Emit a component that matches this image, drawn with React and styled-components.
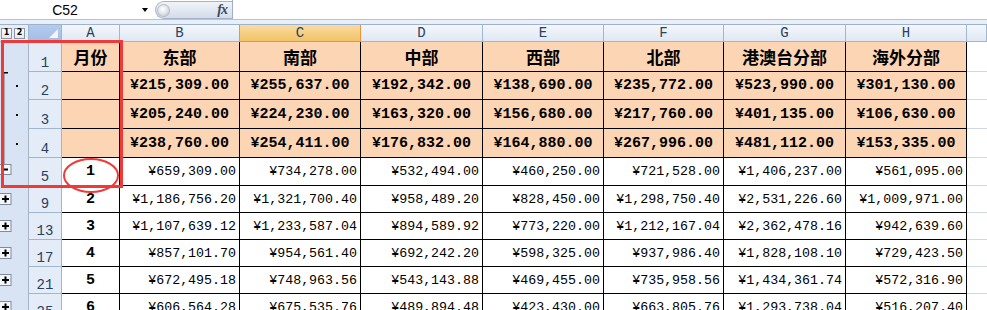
import React from "react"
import styled, { createGlobalStyle, css } from "styled-components"

const GlobalStyle = createGlobalStyle`
    html, body {
        margin: 0;
        padding: 0;
        background: #fff;
    }
    body {
        font-family: "Liberation Sans", Arial, sans-serif;
    }
`

const RED = "#ef3a3a"
const GRID = "#9eb6ce"

const columns = [
    { key: "A", w: 58 },
    { key: "B", w: 120 },
    { key: "C", w: 121 },
    { key: "D", w: 122 },
    { key: "E", w: 121 },
    { key: "F", w: 120 },
    { key: "G", w: 122 },
    { key: "H", w: 121 },
]

const titles = ["月份", "东部", "南部", "中部", "西部", "北部", "港澳台分部", "海外分部"]

const summaryRows = [
    { num: 2, h: 28, outline: "top", vals: ["¥215,309.00", "¥255,637.00", "¥192,342.00", "¥138,690.00", "¥235,772.00", "¥523,990.00", "¥301,130.00"] },
    { num: 3, h: 29, outline: "mid", vals: ["¥205,240.00", "¥224,230.00", "¥163,320.00", "¥156,680.00", "¥217,760.00", "¥401,135.00", "¥106,630.00"] },
    { num: 4, h: 29, outline: "mid", vals: ["¥238,760.00", "¥254,411.00", "¥176,832.00", "¥164,880.00", "¥267,996.00", "¥481,112.00", "¥153,335.00"] },
]

const monthRows = [
    { num: 5, h: 28, outline: "minus", month: 1, vals: ["¥659,309.00", "¥734,278.00", "¥532,494.00", "¥460,250.00", "¥721,528.00", "¥1,406,237.00", "¥561,095.00"] },
    { num: 9, h: 27, outline: "plus", month: 2, vals: ["¥1,186,756.20", "¥1,321,700.40", "¥958,489.20", "¥828,450.00", "¥1,298,750.40", "¥2,531,226.60", "¥1,009,971.00"] },
    { num: 13, h: 27, outline: "plus", month: 3, vals: ["¥1,107,639.12", "¥1,233,587.04", "¥894,589.92", "¥773,220.00", "¥1,212,167.04", "¥2,362,478.16", "¥942,639.60"] },
    { num: 17, h: 27, outline: "plus", month: 4, vals: ["¥857,101.70", "¥954,561.40", "¥692,242.20", "¥598,325.00", "¥937,986.40", "¥1,828,108.10", "¥729,423.50"] },
    { num: 21, h: 27, outline: "plus", month: 5, vals: ["¥672,495.18", "¥748,963.56", "¥543,143.88", "¥469,455.00", "¥735,958.56", "¥1,434,361.74", "¥572,316.90"] },
    { num: 25, h: 27, outline: "plus", month: 6, vals: ["¥606,564.28", "¥675,535.76", "¥489,894.48", "¥423,430.00", "¥663,805.76", "¥1,293,738.04", "¥516,207.40"] },
]

const Window = styled.div`
    position: relative;
    width: 987px;
    height: 310px;
    overflow: hidden;
    display: flex;
    flex-direction: column;
    background: #fff;
`

const FormulaBar = styled.div`
    display: flex;
    flex: none;
    height: 20px;
    box-sizing: border-box;
    border-bottom: 1px solid #b4c3d6;
    background: #fff;
`

const NameBox = styled.div`
    width: 130px;
    display: flex;
    align-items: center;
    justify-content: center;
    font: 14px "Liberation Sans", Arial, sans-serif;
    color: #000;
`

const NameArrow = styled.div`
    width: 25px;
    box-sizing: border-box;
    padding-left: 12px;
    display: flex;
    align-items: center;

    &::before {
        content: "";
        border-left: 3.5px solid transparent;
        border-right: 3.5px solid transparent;
        border-top: 4px solid #000;
    }
`

const FxPill = styled.div`
    width: 77px;
    height: 18px;
    margin-top: 1px;
    box-sizing: border-box;
    border: 1px solid #a3b4ca;
    border-right: none;
    border-radius: 9px 0 0 9px;
    background: linear-gradient(#f1f4f9, #d3dcea);
    display: flex;
    align-items: center;
    justify-content: space-between;
    padding: 0 5px 0 1px;
`

const Knob = styled.span`
    width: 13px;
    height: 13px;
    border-radius: 50%;
    background: radial-gradient(circle at 45% 40%, #ffffff 0%, #e3e7ec 40%, #a9b2bd 100%);
    box-shadow: inset 0 0 0 1px #b5bfcb;
`

const Fx = styled.span`
    font: italic bold 14px "Liberation Serif", "Times New Roman", serif;
    color: #3c4a5b;
    letter-spacing: -1px;
`

const FormulaInput = styled.div`
    flex: 1;
    border-left: 1px solid #9db0c8;
    background: #fff;
`

const Band = styled.div`
    flex: none;
    height: 5px;
    box-sizing: border-box;
    background: #e9eff8;
    border-bottom: 1px solid #9cb2cd;
`

const SheetRow = styled.div`
    display: flex;
    flex: none;
    height: ${p => p.$h}px;
`

const OutlineHeader = styled.div`
    width: 29px;
    flex: none;
    box-sizing: border-box;
    border-right: 1px solid ${GRID};
    border-bottom: 1px solid ${GRID};
    background: #e6edf7;
    display: flex;
    align-items: center;
    gap: 2px;
    padding-left: 1px;
`

const LevelButton = styled.span`
    width: 11px;
    height: 11px;
    box-sizing: border-box;
    border: 1px solid #8a96a4;
    background: linear-gradient(#ffffff, #e4e9f0);
    font: bold 8px "DejaVu Sans", sans-serif;
    color: #000;
    display: flex;
    align-items: center;
    justify-content: center;
    line-height: 1;
`

const SelectAll = styled.div`
    width: 33px;
    flex: none;
    box-sizing: border-box;
    border-right: 1px solid ${GRID};
    border-bottom: 1px solid ${GRID};
    background: linear-gradient(#b4cbec, #a3bde6);
    display: flex;
    align-items: flex-end;
    justify-content: flex-end;
    padding: 0 3px 3px 0;

    &::after {
        content: "";
        border-left: 9px solid transparent;
        border-bottom: 9px solid #f2f6fc;
    }
`

const ColHeader = styled.div`
    width: ${p => p.$w}px;
    flex: ${p => (p.$w ? "none" : "1")};
    box-sizing: border-box;
    border-right: 1px solid ${GRID};
    border-bottom: 1px solid ${GRID};
    background: linear-gradient(#f4f7fb, #e0e8f3);
    display: flex;
    align-items: center;
    justify-content: center;
    font: 14px "Liberation Mono", "Courier New", monospace;
    color: #2a405c;

    ${p => p.$active && css`
        background: linear-gradient(#f9dca3, #f2c266);
        border-right-color: #f29436;
        border-bottom-color: #f29436;
        border-left: 1px solid #f29436;
        margin-left: -1px;
        width: ${p.$w + 1}px;
    `}
`

const OutlineCell = styled.div`
    width: 29px;
    flex: none;
    box-sizing: border-box;
    border-right: 1px solid #a6b4c6;
    background: #d8e4f3;

    svg {
        display: block;
    }
`

const RowHeader = styled.div`
    width: 33px;
    flex: none;
    box-sizing: border-box;
    border-right: 1px solid ${GRID};
    border-bottom: 1px solid ${GRID};
    background: #e4ecf7;
    display: flex;
    align-items: flex-end;
    justify-content: center;
    padding-bottom: 1px;
    font: 14px/1 "Liberation Mono", "Courier New", monospace;
    color: #253f5e;
`

const variants = {
    title: css`
        font: bold 17px "Noto Sans CJK SC", "Liberation Sans", sans-serif;
        justify-content: center;
    `,
    total: css`
        font: bold 15px "Liberation Mono", "Courier New", monospace;
        justify-content: center;
    `,
    month: css`
        font: bold 15px "Liberation Mono", "Courier New", monospace;
        justify-content: center;
    `,
    num: css`
        font: 13.3px "Liberation Mono", "Courier New", monospace;
        justify-content: flex-end;
    `,
}

const Cell = styled.div`
    width: ${p => p.$w}px;
    flex: none;
    box-sizing: border-box;
    border-right: 1px solid #000;
    border-bottom: 1px solid #000;
    background: ${p => (p.$peach ? "#fcd5b4" : "#fff")};
    display: flex;
    align-items: center;
    padding: 0 3px;
    white-space: nowrap;
    overflow: hidden;
    color: #000;
    ${p => variants[p.$variant]}
`

const EmptyCell = styled.div`
    flex: 1;
    box-sizing: border-box;
    border-bottom: 1px solid #d0d7e5;
    background: #fff;
`

const Frame = styled.div`
    position: absolute;
    left: 1px;
    top: 40px;
    width: 122px;
    height: 148px;
    box-sizing: border-box;
    border: 3px solid ${RED};
    pointer-events: none;
`

const Ring = styled.svg`
    position: absolute;
    left: 62px;
    top: 157px;
    pointer-events: none;
`

function OutlineGlyph({ kind, h }) {
    const mid = Math.round(h / 2)
    return (
        <svg width="28" height={h}>
            {(kind === "top" || kind === "mid") && (
                <>
                    <line x1="3.5" y1="0" x2="3.5" y2={h} stroke="#000" strokeWidth="1.5" />
                    <rect x="16" y={mid - 1} width="2" height="2" fill="#000" />
                </>
            )}
            {kind === "top" && <line x1="3" y1="0.75" x2="8" y2="0.75" stroke="#000" strokeWidth="1.5" />}
            {kind === "minus" && (
                <>
                    <line x1="3.5" y1="0" x2="3.5" y2="6" stroke="#000" strokeWidth="1.5" />
                    <rect x="-1" y="6.5" width="12" height="10" fill="#f4f6fa" stroke="#7f8b99" />
                    <line x1="2" y1="11.5" x2="8" y2="11.5" stroke="#000" strokeWidth="2" />
                </>
            )}
            {kind === "plus" && (
                <>
                    <rect x="-1" y="7.5" width="12" height="11" fill="#f4f6fa" stroke="#7f8b99" />
                    <line x1="2" y1="13" x2="9" y2="13" stroke="#000" strokeWidth="2" />
                    <line x1="5.5" y1="9.5" x2="5.5" y2="16.5" stroke="#000" strokeWidth="2" />
                </>
            )}
        </svg>
    )
}

export default function App() {
    return (
        <Window>
            <GlobalStyle />
            <FormulaBar>
                <NameBox>C52</NameBox>
                <NameArrow />
                <FxPill>
                    <Knob />
                    <Fx>fx</Fx>
                </FxPill>
                <FormulaInput />
            </FormulaBar>
            <Band />

            <SheetRow $h={17}>
                <OutlineHeader>
                    <LevelButton>1</LevelButton>
                    <LevelButton>2</LevelButton>
                </OutlineHeader>
                <SelectAll />
                {columns.map(c => (
                    <ColHeader key={c.key} $w={c.w} $active={c.key === "C"}>{c.key}</ColHeader>
                ))}
                <ColHeader />
            </SheetRow>

            <SheetRow $h={30}>
                <OutlineCell><OutlineGlyph kind="none" h={30} /></OutlineCell>
                <RowHeader>1</RowHeader>
                {columns.map((c, i) => (
                    <Cell key={c.key} $w={c.w} $peach $variant="title">{titles[i]}</Cell>
                ))}
                <EmptyCell />
            </SheetRow>

            {summaryRows.map(r => (
                <SheetRow key={r.num} $h={r.h}>
                    <OutlineCell><OutlineGlyph kind={r.outline} h={r.h} /></OutlineCell>
                    <RowHeader>{r.num}</RowHeader>
                    <Cell $w={columns[0].w} $peach $variant="total" />
                    {r.vals.map((v, i) => (
                        <Cell key={i} $w={columns[i + 1].w} $peach $variant="total">{v}</Cell>
                    ))}
                    <EmptyCell />
                </SheetRow>
            ))}

            {monthRows.map(r => (
                <SheetRow key={r.num} $h={r.h}>
                    <OutlineCell><OutlineGlyph kind={r.outline} h={r.h} /></OutlineCell>
                    <RowHeader>{r.num}</RowHeader>
                    <Cell $w={columns[0].w} $variant="month">{r.month}</Cell>
                    {r.vals.map((v, i) => (
                        <Cell key={i} $w={columns[i + 1].w} $variant="num">{v}</Cell>
                    ))}
                    <EmptyCell />
                </SheetRow>
            ))}

            <Frame />
            <Ring width="58" height="37">
                <ellipse cx="29" cy="18.5" rx="27" ry="16.5" fill="none" stroke={RED} strokeWidth="2" />
            </Ring>
        </Window>
    )
}
